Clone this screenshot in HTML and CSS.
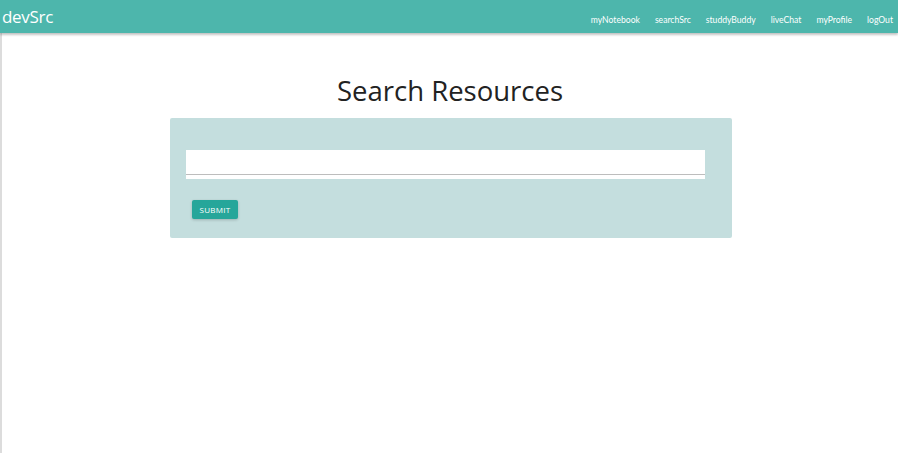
FILE: index.html
```html
<!DOCTYPE html>
<html>
<head>
<meta charset="utf-8">
<link rel="stylesheet" href="styles.css">
</head>
<body>
<nav class="navbar">
  <a class="brand" href="#">devSrc</a>
  <ul class="nav-links">
    <li><a href="#">myNotebook</a></li>
    <li><a href="#">searchSrc</a></li>
    <li><a href="#">studdyBuddy</a></li>
    <li><a href="#">liveChat</a></li>
    <li><a href="#">myProfile</a></li>
    <li><a href="#">logOut</a></li>
  </ul>
</nav>
<main class="page">
  <h1 class="title">Search Resources</h1>
  <section class="card">
    <div class="field"><input class="search-input" type="text"></div>
    <button class="btn" type="button">SUBMIT</button>
  </section>
</main>
</body>
</html>
```
FILE: styles.css
```css
* { box-sizing: border-box; }
html, body { margin: 0; padding: 0; height: 100%; }
body {
  font-family: "Open Sans", "Noto Sans", sans-serif;
  background: #fff;
  color: #222;
}
.navbar {
  height: 33px;
  background: #4db6ac;
  display: flex;
  align-items: center;
  justify-content: space-between;
  box-shadow: 0 2px 2px rgba(0,0,0,0.16), 0 1px 3px rgba(0,0,0,0.12);
  position: relative;
  z-index: 2;
}
.brand {
  color: #fff;
  text-decoration: none;
  font-size: 17px;
  padding-left: 2px;
  padding-bottom: 1px;
  letter-spacing: -0.3px;
}
.nav-links {
  list-style: none;
  margin: 0;
  padding: 0 5px 0 0;
  display: flex;
  gap: 15px;
}
.nav-links a {
  color: #fff;
  text-decoration: none;
  font-family: "Lato", "Open Sans", sans-serif;
  font-size: 8.6px;
}
.page {
  border-left: 2px solid #dcdcdc;
  min-height: calc(100% - 33px);
  padding-top: 38px;
  display: flex;
  flex-direction: column;
  align-items: center;
}
.title {
  font-weight: 400;
  font-size: 27.5px;
  margin: 0 0 7px 0;
  line-height: 40px;
  color: #222;
}
.card {
  width: 562px;
  height: 120px;
  background: #c4dede;
  border-radius: 2px;
  padding: 32px 27px 0 16px;
  margin-left: 2px;
}
.field {
  background: #fff;
  height: 29px;
  padding: 0;
}
.search-input {
  display: block;
  width: 100%;
  height: 25px;
  border: none;
  border-bottom: 1px solid #bdbdbd;
  outline: none;
  background: transparent;
}
.btn {
  display: block;
  margin: 21px 0 0 6px;
  width: 46px;
  height: 19px;
  background: #26a69a;
  color: #fff;
  border: none;
  border-radius: 2px;
  font-family: inherit;
  font-size: 8px;
  letter-spacing: 0.3px;
  padding: 0;
  box-shadow: 0 1px 3px rgba(0,0,0,0.2);
}
```
